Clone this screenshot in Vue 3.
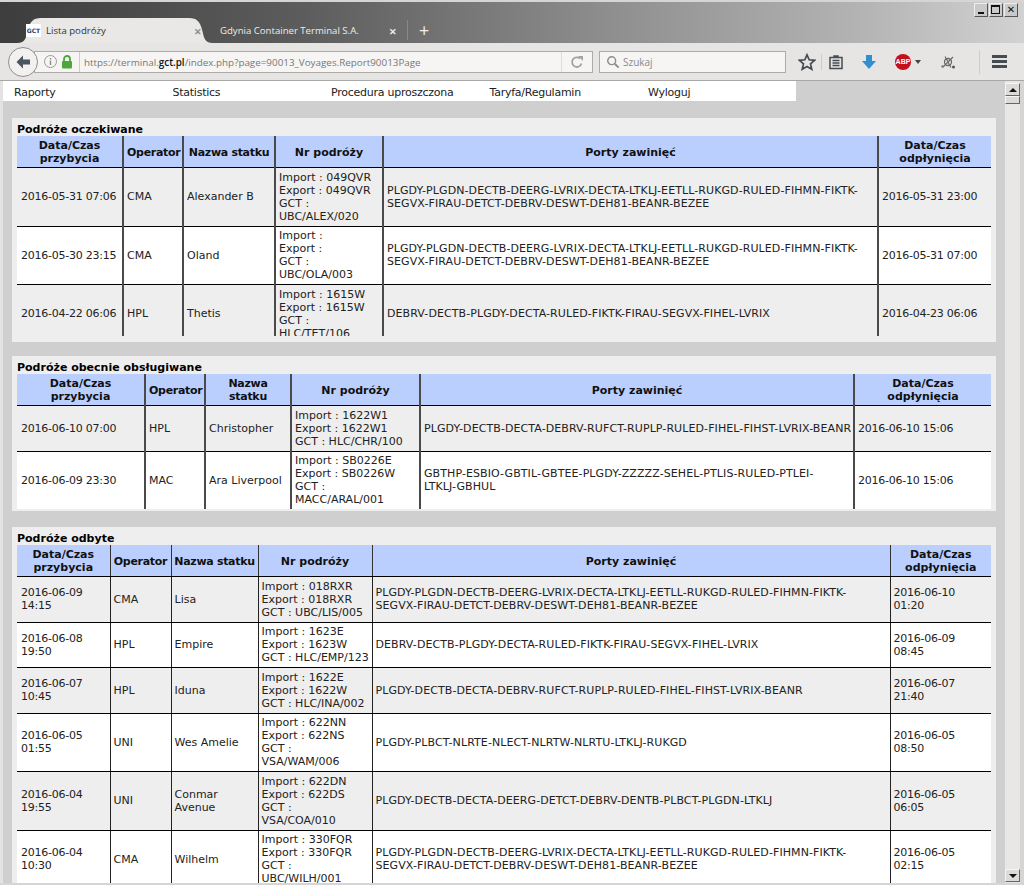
<template>
  <div class="window">
    <div class="tabstrip">
      <div class="tab active">
        <svg class="tab-shape" viewBox="0 0 196 26" preserveAspectRatio="none">
          <path d="M0 26C9 26 9 20 11 12 13 4 16 0 24 0H172C180 0 183 4 185 12 187 20 187 26 196 26Z" fill="#e9e8e6" />
        </svg>
        <span class="favicon">GCT</span>
        <span class="tab-title">Lista podróży</span>
        <span class="tab-close">✕</span>
      </div>
      <div class="tab inactive">
        <span class="tab-title">Gdynia Container Terminal S.A.</span>
        <span class="tab-close white">✕</span>
      </div>
      <div class="tab-sep"></div>
      <div class="tab-plus">+</div>
      <div class="win-buttons">
        <span class="win-btn"><i class="min"></i></span>
        <span class="win-btn"><i class="max"></i></span>
        <span class="win-btn close">✕</span>
      </div>
    </div>

    <div class="navbar">
      <div class="back">
        <svg width="20" height="20" viewBox="0 0 20 20">
          <path d="M10 3.5 3.5 10l6.500 6.500V12.500H17v-5H10Z" fill="#4a5560" />
        </svg>
      </div>
      <div class="urlbar">
        <svg class="info" width="15" height="15" viewBox="0 0 15 15">
          <circle cx="7.500" cy="7.500" r="6" fill="none" stroke="#9a9a9a" />
          <path d="M7.500 6.500v4.500M7.500 4v1.500" stroke="#8a8a8a" stroke-width="1.400" />
        </svg>
        <svg class="lock" width="12" height="14" viewBox="0 0 12 14">
          <path d="M3 6V4a3 3 0 0 1 6 0v2" fill="none" stroke="#4fa63d" stroke-width="1.800" />
          <rect x="1" y="6" width="10" height="7.500" rx="1" fill="#4fa63d" />
        </svg>
        <span class="url-sep"></span>
        <span class="url">https://terminal.<b>gct.pl</b>/index.php?page=90013_Voyages.Report90013Page</span>
        <span class="reload">
          <svg width="14" height="14" viewBox="0 0 14 14">
            <path d="M11.500 8.500A4.800 4.800 0 1 1 10 3.500" fill="none" stroke="#a3a3a3" stroke-width="1.800" />
            <path d="M8 1h5v5Z" fill="#a3a3a3" />
          </svg>
        </span>
      </div>
      <div class="searchbar">
        <svg width="14" height="14" viewBox="0 0 16 16">
          <circle cx="6.500" cy="6.500" r="4.500" fill="none" stroke="#8f8f8f" stroke-width="1.700" />
          <path d="M10 10l4.500 4.500" stroke="#8f8f8f" stroke-width="2.200" />
        </svg>
        <span>Szukaj</span>
      </div>
      <div class="tools">
        <svg class="t-star" width="18" height="18" viewBox="0 0 18 18">
          <path d="M9 1.800 11.200 6.800 16.600 7.300 12.500 10.900 13.800 16.200 9 13.400 4.200 16.200 5.500 10.900 1.400 7.300 6.800 6.800Z" fill="none" stroke="#454c54" stroke-width="1.700" />
        </svg>
        <span class="t-sep"></span>
        <svg class="t-list" width="16" height="16" viewBox="0 0 16 16">
          <path d="M2 3.500h12v11H2ZM6 3.500V2h4v1.500" fill="none" stroke="#454c54" stroke-width="1.500" />
          <path d="M4.500 6.500h7M4.500 9h7M4.500 11.500h7" stroke="#454c54" stroke-width="1.400" />
        </svg>
        <svg class="t-down" width="16" height="16" viewBox="0 0 16 16">
          <path d="M5 1h6v6h4l-7 8-7-8h4Z" fill="#2f8fd0" />
        </svg>
        <span class="abp">ABP</span>
        <span class="caret"></span>
        <svg class="t-net" width="16" height="16" viewBox="0 0 16 16">
          <circle cx="8" cy="8" r="3.500" fill="none" stroke="#666" stroke-width="1.300" />
          <path d="M5 2.500l6 11M13 3 3 13" stroke="#666" stroke-width="1.100" />
          <circle cx="13.500" cy="13" r="1.500" fill="#555" />
          <circle cx="2.500" cy="12.500" r="1.200" fill="#777" />
        </svg>
        <span class="t-sep menu-sep"></span>
        <span class="burger"><i></i><i></i><i></i></span>
      </div>
    </div>

    <div class="viewport">
      <div class="page">
        <div class="menu">
          <a v-for="item in menu" :key="item">{{ item }}</a>
        </div>

        <section v-for="s in sections" :key="s.title" class="panel" :class="s.cls">
          <h3>{{ s.title }}</h3>
          <div class="table-wrap">
            <table>
              <colgroup>
                <col v-for="(w, i) in s.cols" :key="i" :style="{ width: w + 'px' }" />
              </colgroup>
              <thead>
                <tr>
                  <th>Data/Czas<br />przybycia</th>
                  <th class="tight">Operator</th>
                  <th class="tight">Nazwa statku</th>
                  <th>Nr podróży</th>
                  <th>Porty zawinięć</th>
                  <th>Data/Czas<br />odpłynięcia</th>
                </tr>
              </thead>
              <tbody>
                <tr v-for="r in s.rows" :key="r[0]">
                  <td v-for="(c, i) in r" :key="i" :class="'c' + i">
                    <template v-if="i === 3">
                      <div v-for="l in c" :key="l">{{ l }}</div>
                    </template>
                    <template v-else>{{ c }}</template>
                  </td>
                </tr>
              </tbody>
            </table>
          </div>
        </section>
      </div>
      <div class="scrollbar">
        <span class="sb-btn"><i class="up"></i></span>
        <span class="sb-thumb"></span>
        <span class="sb-track"></span>
        <span class="sb-btn"><i class="down"></i></span>
      </div>
    </div>
  </div>
</template>

<script setup>
const menu = ['Raporty', 'Statistics', 'Procedura uproszczona', 'Taryfa/Regulamin', 'Wyloguj']

const longRoute = 'PLGDY-PLGDN-DECTB-DEERG-LVRIX-DECTA-LTKLJ-EETLL-RUKGD-RULED-FIHMN-FIKTK-\nSEGVX-FIRAU-DETCT-DEBRV-DESWT-DEH81-BEANR-BEZEE'
const hplRoute = 'DEBRV-DECTB-PLGDY-DECTA-RULED-FIKTK-FIRAU-SEGVX-FIHEL-LVRIX'
const chrRoute = 'PLGDY-DECTB-DECTA-DEBRV-RUFCT-RUPLP-RULED-FIHEL-FIHST-LVRIX-BEANR'

const sections = [
  {
    title: 'Podróże oczekiwane',
    cls: 'clipped',
    cols: [106, 60, 92, 108, 495, 113],
    rows: [
      ['2016-05-31 07:06', 'CMA', 'Alexander B', ['Import : 049QVR', 'Export : 049QVR', 'GCT :', 'UBC/ALEX/020'], longRoute, '2016-05-31 23:00'],
      ['2016-05-30 23:15', 'CMA', 'Oland', ['Import :', 'Export :', 'GCT :', 'UBC/OLA/003'], longRoute, '2016-05-31 07:00'],
      ['2016-04-22 06:06', 'HPL', 'Thetis', ['Import : 1615W', 'Export : 1615W', 'GCT :', 'HLC/TET/106'], hplRoute, '2016-04-23 06:06']
    ]
  },
  {
    title: 'Podróże obecnie obsługiwane',
    cls: 'current',
    cols: [128, 60, 86, 129, 434, 137],
    rows: [
      ['2016-06-10 07:00', 'HPL', 'Christopher', ['Import : 1622W1', 'Export : 1622W1', 'GCT : HLC/CHR/100'], chrRoute, '2016-06-10 15:06'],
      ['2016-06-09 23:30', 'MAC', 'Ara Liverpool', ['Import : SB0226E', 'Export : SB0226W', 'GCT :', 'MACC/ARAL/001'], 'GBTHP-ESBIO-GBTIL-GBTEE-PLGDY-ZZZZZ-SEHEL-PTLIS-RULED-PTLEI-\nLTKLJ-GBHUL', '2016-06-10 15:06']
    ]
  },
  {
    title: 'Podróże odbyte',
    cls: 'done',
    cols: [93, 61, 87, 114, 518, 101],
    rows: [
      ['2016-06-09 14:15', 'CMA', 'Lisa', ['Import : 018RXR', 'Export : 018RXR', 'GCT : UBC/LIS/005'], longRoute, '2016-06-10 01:20'],
      ['2016-06-08 19:50', 'HPL', 'Empire', ['Import : 1623E', 'Export : 1623W', 'GCT : HLC/EMP/123'], hplRoute, '2016-06-09 08:45'],
      ['2016-06-07 10:45', 'HPL', 'Iduna', ['Import : 1622E', 'Export : 1622W', 'GCT : HLC/INA/002'], chrRoute, '2016-06-07 21:40'],
      ['2016-06-05 01:55', 'UNI', 'Wes Amelie', ['Import : 622NN', 'Export : 622NS', 'GCT :', 'VSA/WAM/006'], 'PLGDY-PLBCT-NLRTE-NLECT-NLRTW-NLRTU-LTKLJ-RUKGD', '2016-06-05 08:50'],
      ['2016-06-04 19:55', 'UNI', 'Conmar Avenue', ['Import : 622DN', 'Export : 622DS', 'GCT :', 'VSA/COA/010'], 'PLGDY-DECTB-DECTA-DEERG-DETCT-DEBRV-DENTB-PLBCT-PLGDN-LTKLJ', '2016-06-05 06:05'],
      ['2016-06-04 10:30', 'CMA', 'Wilhelm', ['Import : 330FQR', 'Export : 330FQR', 'GCT :', 'UBC/WILH/001'], longRoute, '2016-06-05 02:15']
    ]
  }
]
</script>

<style>
html,
body {
  margin: 0;
  height: 100%;
  overflow: hidden;
}
</style>

<style scoped>
.window {
  width: 1024px;
  height: 885px;
  display: flex;
  flex-direction: column;
  overflow: hidden;
  font-family: "DejaVu Sans", sans-serif;
  font-size: 11px;
  color: #111;
  background: #d6d5d3;
}

.tabstrip {
  height: 41px;
  margin-top: 2px;
  flex: none;
  display: flex;
  align-items: flex-end;
  padding-left: 17px;
  background: linear-gradient(90deg, #3d3d3d 0%, #5d5d5d 30%, #8f8f8f 60%, #b5b5b5 85%, #d2d2d2 100%);
  position: relative;
  font-family: "Open Sans", sans-serif;
}
.tab {
  height: 25px;
  display: flex;
  align-items: center;
  font-size: 9.6px;
  position: relative;
}
.tab.active {
  width: 196px;
  color: #333;
}
.tab-shape {
  position: absolute;
  inset: 0;
  width: 100%;
  height: 100%;
}
.favicon {
  position: relative;
  width: 15px;
  height: 13px;
  margin-left: 9px;
  background: #fff;
  color: #2b3a6b;
  font: bold 6px "DejaVu Sans", sans-serif;
  line-height: 13px;
  text-align: center;
}
.tab-title {
  position: relative;
  margin-left: 5px;
  white-space: nowrap;
}
.tab-close {
  position: absolute;
  right: 11px;
  top: 7px;
  font-size: 9px;
  font-weight: bold;
  color: #8b8b8b;
}
.tab-close.white {
  right: 10px;
  color: #eee;
}
.tab.inactive {
  width: 194px;
  color: #ececec;
  padding-left: 2px;
  box-sizing: border-box;
}
.tab-sep {
  width: 1px;
  height: 20px;
  margin-bottom: 3px;
  background: #888;
}
.tab-plus {
  margin-left: 11px;
  height: 25px;
  line-height: 24px;
  font-size: 18px;
  color: #eee;
}
.win-buttons {
  position: absolute;
  top: 1px;
  right: 6px;
  display: flex;
  gap: 1px;
}
.win-btn {
  width: 12px;
  height: 12px;
  border: 1px solid;
  border-color: #eee #555 #555 #eee;
  background: #c9c9c9;
  position: relative;
  font: bold 10px/12px "DejaVu Sans", sans-serif;
  text-align: center;
  color: #111;
}
.win-btn .min {
  position: absolute;
  left: 3px;
  bottom: 2px;
  width: 6px;
  height: 2px;
  background: #111;
}
.win-btn .max {
  position: absolute;
  left: 1px;
  top: 1px;
  width: 7px;
  height: 6px;
  border: 1px solid #111;
  border-top-width: 2px;
}

.navbar {
  height: 38px;
  flex: none;
  box-sizing: border-box;
  border-bottom: 1px solid #a8a7a5;
  background: #e6e5e3;
  display: flex;
  align-items: center;
  padding-left: 8px;
  font-family: "Open Sans", sans-serif;
}
.back {
  width: 28px;
  height: 28px;
  border-radius: 50%;
  border: 1px solid #8e8e8c;
  background: #f2f1ef;
  display: flex;
  align-items: center;
  justify-content: center;
  flex: none;
  position: relative;
  z-index: 1;
}
.urlbar {
  width: 559px;
  height: 22px;
  margin-left: -4px;
  box-sizing: border-box;
  border: 1px solid #aeaba6;
  background: #f6f5f4;
  display: flex;
  align-items: center;
  padding-left: 8px;
  flex: none;
}
.lock {
  margin-left: 3px;
}
.url-sep {
  width: 1px;
  height: 20px;
  margin: 0 4px 0 6px;
  background: #ccc;
}
.url {
  font-size: 9.85px;
  color: #777;
  white-space: nowrap;
}
.url b {
  color: #111;
  font-weight: 600;
}
.reload {
  margin-left: auto;
  width: 30px;
  height: 20px;
  border-left: 1px solid #ddd;
  display: flex;
  align-items: center;
  justify-content: center;
}
.searchbar {
  width: 187px;
  height: 22px;
  margin-left: 6px;
  box-sizing: border-box;
  border: 1px solid #aeaba6;
  background: #f6f5f4;
  display: flex;
  align-items: center;
  gap: 3px;
  padding-left: 6px;
  font-size: 10px;
  color: #8a8a8a;
  flex: none;
}
.tools {
  display: flex;
  align-items: center;
  flex: 1;
  height: 100%;
  position: relative;
}
.t-star {
  margin-left: 12px;
}
.t-sep {
  width: 1px;
  height: 16px;
  margin-left: 5px;
  background: #ccc;
}
.t-list {
  margin-left: 6px;
}
.t-down {
  margin-left: 17px;
}
.abp {
  margin-left: 18px;
  width: 16px;
  height: 16px;
  border-radius: 50%;
  background: #c4101c;
  color: #fff;
  font: bold 7px/16px "Liberation Sans", sans-serif;
  text-align: center;
}
.caret {
  margin-left: 4px;
  border: 3.500px solid transparent;
  border-top: 4px solid #444;
  border-bottom: 0;
}
.t-net {
  margin-left: 19px;
}
.menu-sep {
  height: 24px;
  margin-left: 23px;
}
.burger {
  margin-left: 12px;
  width: 15px;
  display: flex;
  flex-direction: column;
  gap: 2px;
}
.burger i {
  height: 3px;
  background: #454c54;
}

.viewport {
  flex: 1;
  min-height: 0;
  display: flex;
  margin-bottom: 2px;
  padding-left: 3px;
  background: linear-gradient(90deg, #e4e3e1 3px, #cfcfcf 3px);
}
.page {
  width: 1002px;
  flex: none;
  overflow: hidden;
}
.menu {
  width: 793px;
  height: 20px;
  background: #fff;
  display: flex;
  margin-bottom: 17px;
}
.menu a {
  width: 158.500px;
  box-sizing: border-box;
  padding-left: 11px;
  line-height: 21px;
  padding-top: 1px;
  letter-spacing: -0.25px;
  color: #222;
}
.panel {
  width: 984px;
  margin: 0 0 14px 9px;
  box-sizing: border-box;
  background: #eee;
  padding: 4px 5px 2px;
}
.panel.current {
  margin-bottom: 16px;
}
.panel h3 {
  margin: 0;
  height: 14px;
  font-size: 11px;
  line-height: 16px;
  font-weight: bold;
  color: #000;
}
.clipped .table-wrap {
  height: 200px;
  overflow: hidden;
}
.clipped {
  height: 224px;
}
table {
  width: 974px;
  table-layout: fixed;
  border-collapse: collapse;
  border-spacing: 0;
}
th {
  background: #bbcfff;
  font-weight: bold;
  line-height: 13px;
  padding: 3px 3px 2px;
  text-align: center;
  border-left: 1px solid #333;
  border-bottom: 1px solid #000;
  color: #111;
}
th.tight {
  letter-spacing: -0.3px;
}
.done th {
  padding-left: 1px;
  padding-right: 1px;
}
td {
  padding: 2.75px 3px;
  line-height: 13px;
  border-left: 1px solid #222;
  border-bottom: 1px solid #000;
  vertical-align: middle;
  color: #222;
  overflow: hidden;
}
.clipped th,
.current th,
.clipped td,
.current td {
  border-left: 2px solid #4a4a4a;
}
th:first-child,
td:first-child {
  border-left: 0 !important;
}
td.c0 {
  padding-left: 4px;
}
td.c0,
td.c5 {
  letter-spacing: -0.25px;
}
td.c3 div {
  white-space: nowrap;
}
td.c4 {
  padding-right: 1px;
  letter-spacing: 0.09px;
  white-space: pre-line;
}
tbody tr:nth-child(even) {
  background: #fff;
}
tbody tr:last-child td {
  border-bottom: 0;
}

.scrollbar {
  width: 19px;
  box-sizing: border-box;
  padding: 2px 4px 1px 0;
  display: flex;
  flex-direction: column;
  background: linear-gradient(90deg, #e8e7e5 15px, #d6d5d3 15px);
}
.sb-btn {
  height: 13px;
  flex: none;
  box-sizing: border-box;
  border: 1px solid;
  border-color: #f5f5f5 #666 #666 #f5f5f5;
  background: #dcdbd9;
  display: flex;
  align-items: center;
  justify-content: center;
}
.sb-btn .up {
  border: 4px solid transparent;
  border-bottom: 4px solid #111;
  border-top: 0;
}
.sb-btn .down {
  border: 4px solid transparent;
  border-top: 4px solid #111;
  border-bottom: 0;
}
.sb-thumb {
  height: 8px;
  flex: none;
  box-sizing: border-box;
  border: 1px solid;
  border-color: #f5f5f5 #666 #666 #f5f5f5;
  background: #dcdbd9;
}
.sb-track {
  flex: 1;
}
</style>
